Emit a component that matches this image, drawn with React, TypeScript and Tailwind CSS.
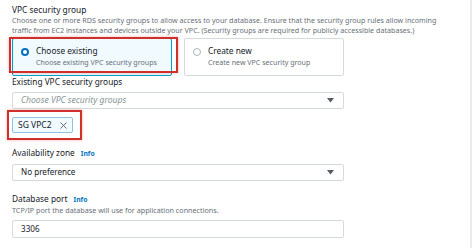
import { X } from "lucide-react"

const font = { fontFamily: '"Noto Sans", "Open Sans", sans-serif' }

function Caret() {
    return (
        <svg width="7" height="5" viewBox="0 0 7 5" className="shrink-0">
            <path d="M0 0 H7 L3.5 4.5 Z" fill="#545b64" />
        </svg>
    )
}

function Radio({ checked }: { checked?: boolean }) {
    return checked ? (
        <span className="mt-[3px] h-[8px] w-[8px] shrink-0 rounded-full border-[2.5px] border-[#0073bb] bg-white" />
    ) : (
        <span className="mt-[3px] h-[8px] w-[8px] shrink-0 rounded-full border border-[#aab7b8] bg-white" />
    )
}

function Info() {
    return <span className="ml-[6px] text-[6.8px] font-bold text-[#0073bb]">Info</span>
}

export default function App() {
    return (
        <div className="h-[248px] w-[474px] overflow-hidden bg-white" style={font}>
            <div className="h-full w-[472px] border-r-2 border-[#e9ebed] pl-[12px] pt-[4px] text-[#16191f]">
                <div className="text-[8.4px] leading-[12px]">VPC security group</div>
                <p className="w-[440px] text-[7.15px] leading-[9.5px] text-[#687078]">
                    Choose one or more RDS security groups to allow access to your database. Ensure that the security group rules allow incoming
                    traffic from EC2 instances and devices outside your VPC. (Security groups are required for publicly accessible databases.)
                </p>

                <div className="mt-[3px] flex w-[332px] gap-[12px]">
                    <div className="relative h-[38px] w-[160px]">
                        <div className="flex h-full gap-[7px] rounded-[2px] border border-[#00a1c9] bg-[#f1faff] pl-[8px] pt-[6px]">
                            <Radio checked />
                            <div>
                                <div className="text-[8.3px] leading-[12px]">Choose existing</div>
                                <div className="text-[7.1px] leading-[10px] text-[#687078]">Choose existing VPC security groups</div>
                            </div>
                        </div>
                        <div className="absolute -left-[3px] -top-[1px] h-[36px] w-[169px] border-2 border-[#d0302c] shadow-[0_0_3px_rgba(208,48,44,0.35)]" />
                    </div>
                    <div className="flex h-[38px] w-[160px] gap-[7px] rounded-[2px] border border-[#d5dbdb] bg-white pl-[8px] pt-[6px]">
                        <Radio />
                        <div>
                            <div className="text-[8.3px] leading-[12px]">Create new</div>
                            <div className="text-[7.1px] leading-[10px] text-[#687078]">Create new VPC security group</div>
                        </div>
                    </div>
                </div>

                <div className="text-[8.3px] leading-[12px]">Existing VPC security groups</div>
                <div className="mt-[4px] flex h-[17px] w-[332px] items-center justify-between rounded-[2px] border border-[#d5dbdb] pl-[8px] pr-[9px]">
                    <span className="text-[8.6px] italic text-[#879596]">Choose VPC security groups</span>
                    <Caret />
                </div>

                <div className="relative mt-[8px] h-[16px] w-[61px]">
                    <div className="flex h-full items-center justify-between rounded-[2px] border border-[#8fc1e0] bg-[#f1faff] pl-[5px] pr-[3px]">
                        <span className="text-[8.5px]">SG VPC2</span>
                        <X className="h-[11px] w-[11px] text-[#545b64]" strokeWidth={2} />
                    </div>
                    <div className="absolute -left-[5px] -top-[7px] h-[30px] w-[75px] border-2 border-[#d0302c] shadow-[0_0_3px_rgba(208,48,44,0.35)]" />
                </div>

                <div className="mt-[14px] flex items-baseline text-[8.3px] leading-[12px]">
                    Availability zone
                    <Info />
                </div>
                <div className="mt-[4px] flex h-[17px] w-[332px] items-center justify-between rounded-[2px] border border-[#d5dbdb] pl-[8px] pr-[9px]">
                    <span className="text-[8.1px]">No preference</span>
                    <Caret />
                </div>

                <div className="mt-[12px] flex items-baseline text-[8.3px] leading-[12px]">
                    Database port
                    <Info />
                </div>
                <div className="text-[7.2px] leading-[9px] text-[#687078]">TCP/IP port the database will use for application connections.</div>
                <div className="mt-[5px] flex h-[18px] w-[332px] items-center rounded-[2px] border border-[#d5dbdb] pl-[8px]">
                    <span className="text-[8.1px]">3306</span>
                </div>
            </div>
        </div>
    )
}
